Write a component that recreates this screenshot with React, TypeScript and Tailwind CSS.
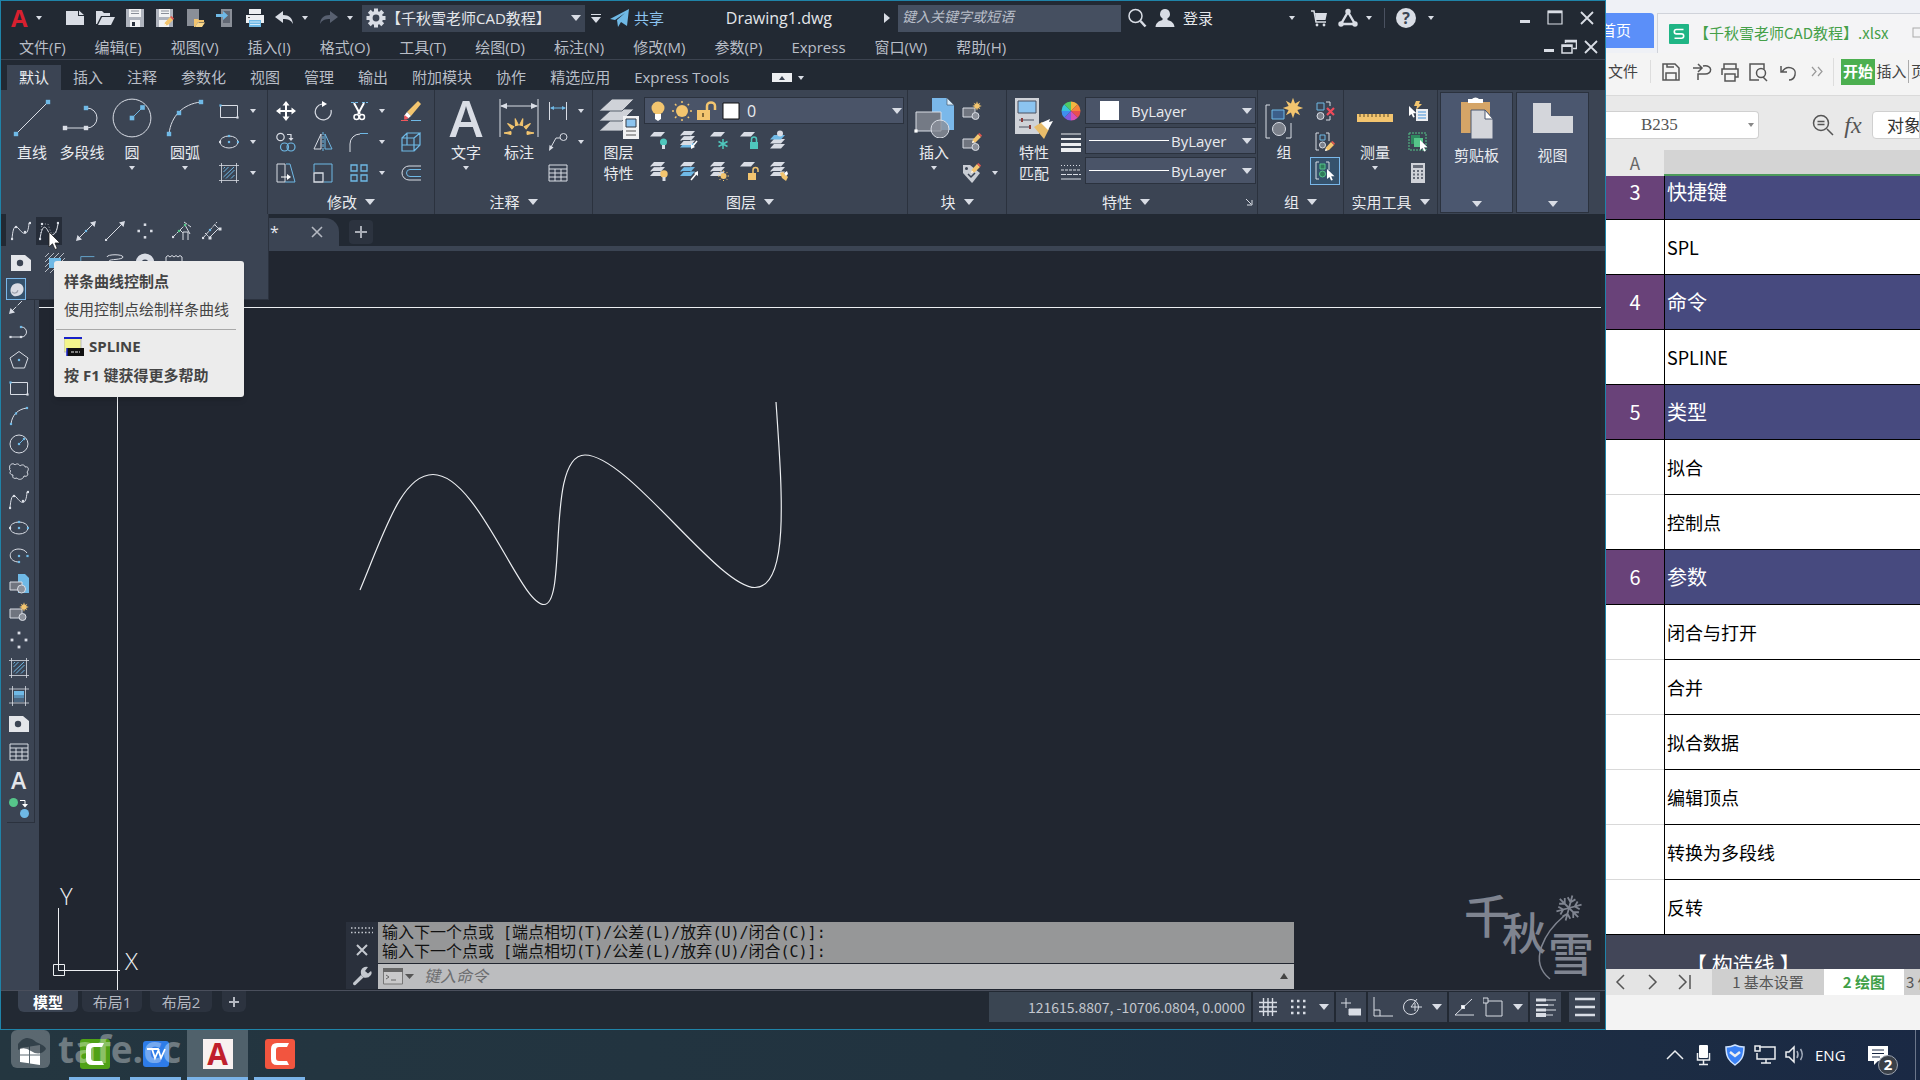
import type { ReactNode } from "react";

const W = "#d9dde5";
const B = "#6fb9e6";
const G = "#56c58a";
const Y = "#f3c56f";

const sheetIcon = (y: number, fill: string) => <path d={`M5 ${y}h11l-4 4.5h-11z`} fill={fill} />;
const dot = (x: number, y: number, fill = W, r = 1.1) => (
  <rect key={`${x}-${y}`} x={x - r} y={y - r} width={r * 2} height={r * 2} fill={fill} />
);
const star = (x: number, y: number, s: number) => (
  <path
    transform={`translate(${x} ${y}) scale(${s})`}
    d="M0-6 1.2-2.6 4.2-4.2 2.6-1.2 6 0 2.6 1.2 4.2 4.2 1.2 2.6 0 6-1.2 2.6-4.2 4.2-2.6 1.2-6 0-2.6-1.2-4.2-4.2-1.2-2.6z"
    fill={Y}
  />
);
const pencil = (x: number, y: number) => (
  <g transform={`translate(${x} ${y})`}>
    <path d="M0 9 1 5.500 6 0 9 3 4 8z" fill={Y} />
    <path d="M6 0 9 3 10 1.500 7.500-1z" fill="#e0574f" />
    <path d="M0 9 .8 6.500 2.500 8.200z" fill="#fff" />
  </g>
);
const arrow = (x: number, y: number) => (
  <path transform={`translate(${x} ${y})`} d="M0 0v10l2.500-2 1.600 3.600 1.700-.7-1.600-3.600H7.500z" fill="#fff" />
);
const layers = (mid = W) => (
  <>
    {sheetIcon(10.5, mid)}
    {sheetIcon(6, mid)}
    {sheetIcon(1, W)}
    <path d="M3 5.7h8.300M3 10.500h8.300" stroke="#3b4453" strokeWidth=".9" />
  </>
);

const icons: Record<string, ReactNode> = {
  newFile: <path d="M1 3h12v5h6v9H1z M14 2.500 19 7h-5z" fill={W} />,
  open: <path d="M1 3h6l2 2h6v3H6L2 16H1z M7 9h13l-4 8H3z" fill={W} />,
  save: (
    <>
      <path d="M1 1h18v18H1z" fill="#aeb3bd" />
      <path d="M4 1h12v8H4zM5 12h10v7H5z" fill="#f1f2f4" />
      <path d="M6 3h8M6 5.500h8" stroke="#8a8f99" />
      <path d="M7 14h3v4H7z" fill="#2a313d" />
    </>
  ),
  saveAs: (
    <>
      <path d="M1 1h17v18H1z" fill="#aeb3bd" />
      <path d="M4 1h11v8H4zM4 12h10v7H4z" fill="#f1f2f4" />
      <path d="M6 3h8M6 5.500h8" stroke="#8a8f99" />
      {pencil(9, 9)}
    </>
  ),
  openWeb: (
    <>
      <path d="M2 1h12v17H2z" fill="#8a8f98" />
      <path d="M9 11h4l1 1h5v2h-6l-3 5H9z" fill={Y} />
      <path d="M13 14.500h7L17 19h-7z" fill="#fbd88b" />
    </>
  ),
  saveWeb: (
    <>
      <path d="M6 1h11v18H6z" fill="#8a8f98" />
      <path d="M8 3h7v12H8z" fill="#626874" />
      <path d="M1 6h7V3l5 4.500L8 12V9H1z" fill={B} />
    </>
  ),
  print: (
    <>
      <path d="M4 1h12v5H4zM1 7h18v8H1z" fill="#eceef1" />
      <path d="M4 12h12v7H4z" fill={B} />
      <path d="M5 14h10M5 16.500h10" stroke="#d5ebfa" />
      <path d="M3 9.500h2" stroke="#555" />
    </>
  ),
  undo: <path d="M1 9 9 3v4c6 0 9.500 3 10 9-2-4-5-5-10-5v4z" fill={W} />,
  redo: <path d="M19 9 11 3v4C5 7 1.500 10 1 16c2-4 5-5 10-5v4z" fill="#586070" />,
  gear: (
    <>
      <g fill={W}>
        {[0, 45, 90, 135].map((a) => (
          <rect key={a} x="8" y="0.500" width="4" height="19" transform={`rotate(${a} 10 10)`} />
        ))}
        <circle cx="10" cy="10" r="7" />
      </g>
      <circle cx="10" cy="10" r="3.400" fill="#3b4453" />
    </>
  ),
  plane: <path d="M0 11 19 1l-2 17-6-4-3 5-1-7 8-7-10 7z" fill={B} />,
  search: (
    <g fill="none" stroke={W}>
      <circle cx="8.500" cy="8" r="6.500" strokeWidth="1.500" />
      <path d="m13.500 13 5 5.500" strokeWidth="2.500" />
    </g>
  ),
  user: <path d="M10 1a5 5 0 0 1 2.500 9.300V12c4 1 6.500 3 7 7H.5c.5-4 3-6 7-7v-1.700A5 5 0 0 1 10 1z" fill={W} />,
  cart: (
    <>
      <path d="M2 3h3l2 11h10" fill="none" stroke={W} strokeWidth="1.500" />
      <path d="M6 5h12l-1.500 7H7z" fill={W} />
      <circle cx="8" cy="17" r="1.400" fill={W} />
      <circle cx="15" cy="17" r="1.400" fill={W} />
    </>
  ),
  tri: (
    <g fill="none" stroke={W} strokeWidth="2.400">
      <path d="M10 4 17 16H3z" />
      <circle cx="10" cy="3.500" r="1.500" />
      <circle cx="3" cy="16" r="1.500" />
      <circle cx="17" cy="16" r="1.500" />
    </g>
  ),
  line: (
    <>
      <path d="M2 18 18 2" stroke={W} />
      {dot(2, 18, B)}
      {dot(18, 2, B)}
    </>
  ),
  polyline: (
    <>
      <path d="M1 15h11.500a5 5 0 0 0 0-10" fill="none" stroke={W} />
      {dot(1.5, 15)}
      {dot(12, 15)}
      {dot(12, 5, B)}
    </>
  ),
  circle: (
    <>
      <circle cx="10" cy="10" r="9" fill="none" stroke={W} />
      <path d="m10 10 5-5" stroke={B} />
      {dot(10, 10, B)}
      {dot(15, 5, B)}
    </>
  ),
  arc: (
    <>
      <path d="M2 18C3 9 9 3 18 2" fill="none" stroke={W} />
      {dot(2, 18, B)}
      {dot(7, 7.5, B)}
      {dot(18, 2, B)}
    </>
  ),
  rect: (
    <>
      <path d="M1.500 4.500h17v12h-17z" fill="none" stroke={W} />
      {dot(1.5, 4.5, B)}
      {dot(18.5, 16.5)}
    </>
  ),
  ellipse: (
    <>
      <ellipse cx="10" cy="10" rx="9" ry="6" fill="none" stroke={W} />
      {dot(10, 10, B)}
      {dot(10, 4, B)}
      {dot(19, 10, B)}
      {dot(1, 10)}
    </>
  ),
  ellipseArc: (
    <>
      <path d="M18 7c-2-3-5-4-9-4-11 1-10 13 1 13" fill="none" stroke={W} />
      {dot(10, 10, B)}
      {dot(18.5, 10, B)}
      {dot(10, 16, B)}
    </>
  ),
  hatch: (
    <>
      <path d="M2.500 0v20M17.500 0v20M0 2.500h20M0 17.500h20" stroke={W} strokeWidth=".8" />
      <path d="M4.500 9l5-5M4.500 14 15 4M7 15.500 15.500 7M12 15.500l3.500-3.500M4.500 5.500 6 4" stroke={B} />
    </>
  ),
  gradient: (
    <>
      <path d="M3.500 0v20M16.500 0v20M0 3h20M0 17h20" stroke={W} strokeWidth=".8" />
      <path d="M5 5h10v4H5z" fill={B} />
      <path d="M5 9h10v3H5z" fill="#5a8fb5" />
      <path d="M5 12h10v4H5z" fill="#4a6580" />
    </>
  ),
  move: (
    <path
      d="M10 0 13.500 4.500H11V9h4.500V6.500L20 10l-4.500 3.500V11H11v4.500h2.500L10 20l-3.500-4.500H9V11H4.500v2.500L0 10l4.500-3.500V9H9V4.500H6.500z"
      fill="#fff"
    />
  ),
  rotate: (
    <>
      <path d="M9 3a8 8 0 1 0 9 6" fill="none" stroke={W} strokeWidth="1.200" />
      <path d="M9 0v6l5-3z" fill="#fff" />
    </>
  ),
  trim: (
    <>
      <path d="M2 1.500h7M13 1.500h6" stroke={B} strokeDasharray="3 1" />
      <path d="M5 2l6 11M15 2 9 13" stroke="#fff" strokeWidth="2" />
      <circle cx="7.500" cy="16" r="2.500" fill="none" stroke="#fff" strokeWidth="1.500" />
      <circle cx="13" cy="16" r="2.500" fill="none" stroke="#fff" strokeWidth="1.500" />
    </>
  ),
  erase: (
    <>
      <path d="M6 11 17 0l3 3L10 15z" fill={Y} />
      <path d="m6 11 4 4-3 2.500L3 15z" fill="#fff" />
      <path d="m3.500 14 4 3-2 1.500H3z" fill="#f0575c" />
      <path d="M0 19.500h7" stroke="#f0575c" />
      <path d="M10 19.500h10" stroke={B} />
    </>
  ),
  copy: (
    <g fill="none" strokeWidth="1.200">
      <circle cx="4.500" cy="5" r="3.700" stroke={W} />
      <circle cx="8.500" cy="15" r="4" stroke={B} />
      <circle cx="15" cy="15" r="4" stroke={B} />
      <path d="M11 2.500h4v4" stroke={W} />
      <path d="m12.500 6 2.500 3 2.500-3z" fill={W} />
    </g>
  ),
  mirror: (
    <g fill="none">
      <path d="M8 2v15H1z" stroke={W} />
      <path d="M12 2v15h7z" stroke={B} />
      <path d="M10 0v20" stroke={B} strokeDasharray="3 1" />
    </g>
  ),
  fillet: (
    <>
      <path d="M1 20v-8A10 10 0 0 1 11 2" fill="none" stroke={W} />
      <path d="M11 1.500h8" stroke={B} />
    </>
  ),
  explode: (
    <g fill="none" stroke={B} strokeWidth="1.200">
      <path d="M1 6h12v13H1zM1 6l5-5h13l-6 5M19 1v12l-6 6M6 1v12H1M6 13h13" />
    </g>
  ),
  stretch: (
    <g fill="none">
      <path d="M1 1h8v18H1z" stroke={W} />
      <path d="M10 1h4l5 18H9" stroke={B} />
      <path d="M5 14h8" stroke="#fff" />
      <path d="m11 11 4 3-4 3z" fill="#fff" />
    </g>
  ),
  scale: (
    <g fill="none">
      <path d="M1 10v9h9v-9z" stroke={W} strokeWidth="1.300" />
      <path d="M1 9V1h18v18h-8" stroke={B} />
    </g>
  ),
  array: <path d="M2 2h6v6H2zM12 2h6v6h-6zM2 12h6v6H2zM12 12h6v6h-6z" fill="none" stroke={B} strokeWidth="1.300" />,
  offset: (
    <g fill="none">
      <path d="M20 3H8a7 7 0 0 0 0 14h12" stroke={W} />
      <path d="M20 6.500H9a3.500 3.500 0 0 0 0 7h11" stroke={B} />
    </g>
  ),
  dim: (
    <>
      <path d="M1.500 1v18M18.500 1v18" stroke={W} />
      <path d="M3 7h14" stroke={B} />
      <path d="M2 7l4-2v4zM18 7l-4-2v4z" fill={B} />
    </>
  ),
  leader: (
    <>
      <circle cx="15.500" cy="5" r="3.500" fill="none" stroke={W} />
      <path d="M12 6H8L3 15" fill="none" stroke={W} />
      <path d="M1 19l.5-6 4 2.500z" fill={W} />
    </>
  ),
  table: <path d="M1 2h18v16H1zM1 6h18M1 10h18M1 14h18M7 6v12M13 6v12" fill="none" stroke={W} />,
  layerOff: (
    <>
      {sheetIcon(2, W)}
      <circle cx="14.500" cy="12" r="3.500" fill="#4fc7bd" />
      <path d="M13 15h3v4h-3z" fill={W} />
    </>
  ),
  layerIso: (
    <>
      {sheetIcon(13, B)}
      {layers()}
      <path d="m18 11-5 6" stroke="#fff" strokeWidth="1.500" />
      <path d="M12 19v-5l4 3z" fill="#fff" />
    </>
  ),
  layerFreeze: (
    <>
      {sheetIcon(2, W)}
      <path d="M14 9v10M9.500 11.500l9 5M9.500 16.500l9-5" stroke="#4fc7bd" strokeWidth="1.500" />
    </>
  ),
  layerLock: (
    <>
      {sheetIcon(2, W)}
      <path d="M11 12h8v7h-8z" fill="#4fc7bd" />
      <path d="M12.500 12V9.500a2.500 2.500 0 0 1 5 0V12" fill="none" stroke="#4fc7bd" strokeWidth="1.500" />
    </>
  ),
  layerCurrent: (
    <>
      {sheetIcon(14, W)}
      {sheetIcon(9, W)}
      {sheetIcon(5, B)}
      <circle cx="11" cy="3.500" r="3" fill={W} />
    </>
  ),
  layerOn: (
    <>
      {layers()}
      <circle cx="15" cy="13" r="3.700" fill={Y} />
      <path d="M13.500 16h3v4h-3z" fill={W} />
    </>
  ),
  layerUniso: (
    <>
      {layers(B)}
      <path d="m12 19 5-6" stroke="#fff" strokeWidth="1.500" />
      <path d="M19 10v5l-4-3z" fill="#fff" />
    </>
  ),
  layerThaw: (
    <>
      {layers()}
      <circle cx="14.500" cy="15" r="3" fill={Y} />
      <path d="M14.500 9.500v11M9 15h11M10.500 11l8 8M10.500 19l8-8" stroke={Y} strokeDasharray="1.500 8" />
    </>
  ),
  layerUnlock: (
    <>
      {sheetIcon(1, W)}
      <path d="M9 12h8v7H9z" fill={Y} />
      <path d="M14 12V9a2.500 2.500 0 0 1 5 0v2" fill="none" stroke={Y} strokeWidth="1.500" />
    </>
  ),
  layerMatch: (
    <>
      {layers()}
      <path d="m11 12 3-1 5 5-2 4-4-3z" fill={Y} />
      <path d="m15 12 3-2 1 3-2 2z" fill="#fff" />
    </>
  ),
  blockNew: (
    <>
      <path d="M1 7h12v9H1z" fill="#70757f" stroke={W} />
      <circle cx="13.500" cy="15" r="3.500" fill="#8b909a" stroke={W} />
      {star(15, 5, 0.8)}
    </>
  ),
  blockEdit: (
    <>
      <path d="M1 7h12v9H1z" fill="#70757f" stroke={W} />
      <circle cx="13.500" cy="15" r="3.500" fill="#8b909a" stroke={W} />
      {pencil(10, 2)}
    </>
  ),
  attr: (
    <>
      <path d="M1 2h7l5 4 5 4-7 9-1 1L1 10z" fill="#c9cdd4" />
      <circle cx="4.500" cy="5.500" r="1.500" fill="#3b4453" />
      {pencil(9, 1)}
      <path d="m6 11 3 3 4-4" stroke="#3b4453" fill="none" strokeWidth="1.500" />
    </>
  ),
  insertSmall: (
    <>
      <path d="M9 0h7l4 4v15H9z" fill={B} />
      <path d="M1 8h12v8H1z" fill="#70757f" stroke={W} />
      <circle cx="12.500" cy="15" r="4" fill="#8b909a" stroke={W} />
    </>
  ),
  wheel: (
    <g>
      {["#f4b63f", "#f5843c", "#e94f4f", "#d84fb4", "#7d5be0", "#3f8ff0", "#38c3d8", "#4fc964"].map((c, i) => (
        <path key={c} d="M10 10V.5a9.500 9.500 0 0 1 6.720 2.780z" fill={c} transform={`rotate(${i * 45} 10 10)`} />
      ))}
    </g>
  ),
  weights: <path d="M0 1.500h20v1H0zM0 6h20v2H0zM0 11h20v3H0zM0 16h20v4H0z" fill="#eceef1" />,
  linetypes: (
    <g stroke={W}>
      <path d="M0 2.500h20" strokeDasharray="1 2" />
      <path d="M0 7h20" strokeDasharray="3 1" />
      <path d="M0 11.500h20" strokeDasharray="5 1" />
      <path d="M0 16h20" />
    </g>
  ),
  ungroup: (
    <>
      <path d="M2 2h7v7H2z" fill="none" stroke={B} />
      <path d="M11 1h4v4M15 15v4h-4" fill="none" stroke={W} />
      <circle cx="5.500" cy="15" r="3.500" fill="#7b808a" stroke={W} />
      <path d="m12 7 7 7M19 7l-7 7" stroke="#ef4a5a" strokeWidth="2.200" />
    </>
  ),
  groupEdit: (
    <>
      <path d="M4 1H1v17h3M11 1h3v8" fill="none" stroke={W} />
      <path d="M5 3h5v5H5z" fill="none" stroke={B} />
      <circle cx="7.500" cy="13" r="3" fill="#7b808a" stroke={W} />
      {pencil(10, 10)}
    </>
  ),
  groupSel: (
    <>
      <path d="M4 1H1v17h3M11 1h3v8" fill="none" stroke={W} />
      <path d="M5 3h5v5H5z" fill="#2f7a5a" stroke={G} />
      <circle cx="7.500" cy="13" r="3" fill="#2f7a5a" stroke={G} />
      {arrow(12, 8)}
    </>
  ),
  quickSel: (
    <>
      <path d="M8 0h4l-1 3h3l-6 6 1-4H6z" fill={Y} />
      <path d="M8 8h12v12H8z" fill="#eceef1" />
      <path d="M10 11h8M10 14h8M10 17h8" stroke="#3f8fd8" />
      {arrow(1, 5)}
    </>
  ),
  selAll: (
    <>
      <path d="M1 1h17v17H1z" fill="none" stroke={G} strokeDasharray="2 1" />
      <path d="M3 3h9v9H3z" fill="#2f8a60" />
      <path d="M6 6h9v9H6z" fill={G} />
      {arrow(12, 8)}
    </>
  ),
  calc: (
    <>
      <path d="M3 0h14v20H3z" fill="#cfd2d8" />
      <path d="M5 2h10v3H5z" fill="#666c78" />
      <path d="M5 8h10M5 11.500h10M5 15h10" stroke="#666c78" strokeWidth="2" strokeDasharray="2 2" />
    </>
  ),
  spline: (
    <>
      <path d="M1 18C2 6 4 3 8 8s9 9 10-6" fill="none" stroke={W} />
      {dot(1, 18)}
      {dot(5, 6)}
      {dot(14, 11)}
      {dot(19, 2)}
    </>
  ),
  splineCv: (
    <>
      <path d="M1 18C3 4 6 4 9 10s8 6 10-7" fill="none" stroke={W} />
      <path d="M1 18 3 3h6l3 9h5l2-10" fill="none" stroke={W} strokeWidth=".7" strokeDasharray="1 2" />
      {dot(1, 18)}
      {dot(3, 3)}
      {dot(19, 2)}
    </>
  ),
  xline: (
    <>
      <path d="M3 17 17 3" stroke={W} />
      <path d="M0 20l1.500-6 4.500 4.500zM20 0l-1.500 6L14 1.500z" fill={W} />
      {dot(10, 10, B)}
    </>
  ),
  ray: (
    <>
      <path d="M1 19 17 3" stroke={W} />
      <path d="M20 0l-1.500 6L14 1.500z" fill={W} />
      {dot(1, 19)}
    </>
  ),
  points: <>{[dot(10, 3, W, 1.4), dot(3, 10, W, 1.4), dot(17, 10, W, 1.4), dot(10, 17, W, 1.4)]}</>,
  divide: (
    <>
      <path d="M1 16 13 4M8 9l3 3M12 1l7 5" stroke={W} strokeDasharray="4 1" />
      <path d="M11 19v-8h5v8M13 4l5 9" stroke={W} fill="none" />
      {dot(7, 10, G)}
      {dot(13, 4, G)}
      {dot(1, 16)}
    </>
  ),
  measure: (
    <>
      <path d="M1 17 15 1M3 12l6 6M13 4l5 5" stroke={W} strokeDasharray="4 1" />
      <path d="m8 16 9-9" stroke={W} />
      {dot(8, 9, B)}
      {dot(18, 8, W, 1.5)}
      {dot(8, 17, W, 1.5)}
      {dot(1, 17)}
    </>
  ),
  region: (
    <>
      <path d="M0 2h14l6 5v11H0z" fill="#e4e6ea" />
      <circle cx="9" cy="10" r="3.200" fill="#3b4453" />
    </>
  ),
  wipeout: (
    <>
      <path d="M0 4l4-4M0 9l9-9M0 14 14 0M0 19 19 0M5 20 20 5" stroke={W} strokeWidth=".8" />
      <path d="M4 5h12v10H4z" fill={B} />
    </>
  ),
  block3d: <path d="M1 2h17M1 2v17" fill="none" stroke={B} />,
  helix: <path d="M2 4c0-3 16-3 16 0S4 6 4 8s14 3 14 0" fill="none" stroke={W} />,
  donut: <circle cx="10" cy="10" r="6.500" fill="none" stroke={W} strokeWidth="6" />,
  revcloudRect: <path d="M1 16V4q2-3 4 0 2-3 4 0 2-3 4 0 2-3 4 0v12" fill="none" stroke={W} />,
  polygon: (
    <>
      <path d="M10 1.500 19 8l-3.500 10h-11L1 8z" fill="none" stroke={W} />
      {dot(10, 10, B)}
    </>
  ),
  cloud: (
    <path
      d="M1 7C-1 3 4 0 6 3c2-2 4-1 5 1 2-2 5-1 5 1 4-1 4 3 2 5 2 3 0 5-3 4-1 4-6 4-7 2-3 1-5 0-4-3-3 0-4-3-2-4-2-1-2-2-1-2z"
      fill="none"
      stroke={W}
    />
  ),
  addSel: (
    <>
      <circle cx="4.500" cy="4.500" r="4.500" fill={G} />
      <circle cx="15.500" cy="15.500" r="4.500" fill={B} />
      <path d="M11 2.500h5v4" stroke="#fff" fill="none" />
      <path d="m13 6 3 3.500L19 6z" fill="#fff" />
    </>
  ),
  lineArrow: (
    <>
      <path d="M3 17 17 3" stroke={W} strokeDasharray="6 2" />
      <path d="M0 20l1.500-6 4.500 4.500z" fill={W} />
    </>
  ),
  mask: (
    <>
      <path d="M3 7C5 1 17-1 19 7s-5 12-10 12S0 13 3 7z" fill={W} />
      <path d="M4 13c2 3 7 2 8-2" fill="none" stroke="#9aa0ab" strokeWidth="1.500" />
    </>
  ),
};

/* large icons keep hairline strokes */
const Icon = ({ name, size = 20 }: { name: string; size?: number }) => (
  <svg
    width={size}
    height={size}
    viewBox="0 0 20 20"
    className={`shrink-0 ${size > 30 ? "[&_circle]:[vector-effect:non-scaling-stroke] [&_path]:[vector-effect:non-scaling-stroke]" : ""}`}
    aria-hidden="true"
  >
    {icons[name]}
  </svg>
);

const Caret = ({ big = false }: { big?: boolean }) =>
  big ? (
    <svg width="10" height="6" viewBox="0 0 10 6" className="shrink-0">
      <path d="M0 0h10L5 6z" fill={W} />
    </svg>
  ) : (
    <svg width="6" height="4" viewBox="0 0 6 4" className="shrink-0">
      <path d="M0 0h6L3 4z" fill={W} />
    </svg>
  );

const LetterA = ({ className }: { className: string }) => (
  <span className={`font-['Open_Sans'] ${className}`}>A</span>
);

/* ---------- title bar and menus ---------- */

const quickAccess = ["newFile", "open", "save", "saveAs", "openWeb", "saveWeb", "print"];

const WindowButtons = ({ gap, restore = false }: { gap: string; restore?: boolean }) => (
  <div className={`flex items-center ${gap}`}>
    <button aria-label="最小化" className="h-[10px] w-[10px] border-b-[3px] border-[#d9dde5]" />
    <button aria-label="最大化">
      <svg width="16" height="16" viewBox="0 0 16 16" fill="none" stroke={W}>
        {restore ? (
          <>
            <path d="M4.500 4V1.500h11v8H12" strokeWidth="1.500" />
            <path d="M1 6h10v8H1z" strokeWidth="1.500" />
            <path d="M1 7h10M5 2.500h10" strokeWidth="2" />
          </>
        ) : (
          <>
            <path d="M1 1h14v13H1z" strokeWidth="1.200" />
            <path d="M1 2h14" strokeWidth="2.500" />
          </>
        )}
      </svg>
    </button>
    <button aria-label="关闭">
      <svg width="14" height="14" viewBox="0 0 14 14" stroke={W} strokeWidth="1.800">
        <path d="m1 1 12 12M13 1 1 13" />
      </svg>
    </button>
  </div>
);

const TitleBar = () => (
  <div className="flex h-8 items-center pt-[2px] text-[15px] text-[#e4e6ea]">
    <button aria-label="应用程序菜单" className="flex w-[59px] items-center gap-2 pl-[10px]">
      <LetterA className="text-[24px] leading-6 font-bold text-[#d8202f]" />
      <Caret />
    </button>
    {quickAccess.map((name) => (
      <button key={name} aria-label={name} className="flex w-[30px] justify-center">
        <Icon name={name} />
      </button>
    ))}
    <button aria-label="放弃" className="flex w-[45px] items-center gap-2 pl-1">
      <Icon name="undo" />
      <Caret />
    </button>
    <button aria-label="重做" className="flex w-[47px] items-center gap-2 pl-1">
      <Icon name="redo" />
      <Caret />
    </button>
    <label className="flex h-[27px] w-[223px] items-center bg-[#3b4453] pl-1">
      <Icon name="gear" />
      <select aria-label="工作空间" className="h-6 min-w-0 flex-1 appearance-none bg-transparent text-[15px]">
        <option>【千秋雪老师CAD教程】</option>
      </select>
      <span className="pr-1">
        <Caret big />
      </span>
    </label>
    <button aria-label="自定义快速访问" className="flex w-[21px] flex-col items-center gap-[2px]">
      <span className="h-px w-[10px] bg-[#d9dde5]" />
      <Caret big />
    </button>
    <button className="flex items-center gap-1 pl-1 text-[#8cc4f0]">
      <Icon name="plane" />
      共享
    </button>
    <div className="flex min-w-0 flex-1 items-center justify-end pr-[52px]">
      <span className="text-[16px]">Drawing1.dwg</span>
    </div>
    <svg width="6" height="10" viewBox="0 0 6 10" className="mr-2">
      <path d="M0 0v10l6-5z" fill={W} />
    </svg>
    <input
      aria-label="搜索"
      placeholder="键入关键字或短语"
      className="h-[27px] w-[223px] bg-[#454f60] pb-1 pl-1 text-[14px] italic placeholder:text-[#b9bec8]"
    />
    <button aria-label="搜索" className="flex w-8 justify-center">
      <Icon name="search" />
    </button>
    <button className="flex w-[132px] items-center gap-1 pl-[2px]">
      <Icon name="user" />
      <span className="pl-1">登录</span>
    </button>
    <span className="flex w-[20px] pl-1">
      <Caret />
    </span>
    <button aria-label="购物车" className="flex w-[28px] justify-center">
      <Icon name="cart" />
    </button>
    <button aria-label="应用商店" className="flex w-[51px] items-center gap-2 pl-[5px]">
      <Icon name="tri" />
      <Caret />
    </button>
    <span className="h-5 w-px bg-[#4a5160]" />
    <button aria-label="帮助" className="flex w-[135px] items-center gap-3 pl-[11px]">
      <span className="flex h-5 w-5 items-center justify-center rounded-full bg-[#d9dde5] text-[16px] leading-5 font-bold text-[#3b4453]">
        ?
      </span>
      <Caret />
    </button>
    <WindowButtons gap="gap-[17px]" />
    <span className="w-[11px]" />
  </div>
);

const menus = [
  "文件(F)", "编辑(E)", "视图(V)", "插入(I)", "格式(O)", "工具(T)", "绘图(D)",
  "标注(N)", "修改(M)", "参数(P)", "Express", "窗口(W)", "帮助(H)",
];

const MenuBar = () => (
  <nav className="flex h-[27px] items-center border-b border-[#3c4350] pt-[2px] pl-[18px] text-[15px] text-[#b9bec7]">
    <div className="flex flex-1 gap-[29px]">
      {menus.map((m) => (
        <button key={m} className="leading-6 whitespace-nowrap">
          {m}
        </button>
      ))}
    </div>
    <div className="pr-[7px]">
      <WindowButtons gap="gap-[7px]" restore />
    </div>
  </nav>
);

const ribbonTabs = ["插入", "注释", "参数化", "视图", "管理", "输出", "附加模块", "协作", "精选应用", "Express Tools"];

const RibbonTabs = () => (
  <div className="flex h-[30px] items-end pl-[6px] text-[15px] text-[#b9bec7]">
    <button className="h-[25px] w-[54px] bg-[#3b4453] text-[#eceef1]">默认</button>
    {ribbonTabs.map((t) => (
      <button key={t} className="h-[25px] px-3 whitespace-nowrap">
        {t}
      </button>
    ))}
    <button aria-label="最小化功能区" className="flex h-[25px] items-center gap-[6px] pl-[30px]">
      <span className="flex h-[9px] w-5 items-center justify-center bg-[#eceef1]">
        <svg width="6" height="4" viewBox="0 0 6 4">
          <path d="M0 4h6L3 0z" fill="#3b4453" />
        </svg>
      </span>
      <Caret />
    </button>
  </div>
);

/* ---------- ribbon ---------- */

const Panel = ({ title, width, launcher, children }: { title?: string; width: string; launcher?: boolean; children: ReactNode }) => (
  <section className={`flex h-[124px] shrink-0 flex-col border-r border-[#2b323e] ${width}`}>
    <div className="flex h-[100px] pt-[5px]">{children}</div>
    {title && (
      <div className="flex h-6 items-center">
        <button className="flex flex-1 items-center justify-center gap-2 text-[15px] leading-6">
          {title}
          <Caret big />
        </button>
        {launcher && (
          <svg width="8" height="8" viewBox="0 0 8 8" className="mr-[4px]" fill="none" stroke={W}>
            <path d="m1 1 5 5M7 2v5H2" />
          </svg>
        )}
      </div>
    )}
  </section>
);

const Big = ({ label, width, icon, caret }: { label: string[]; width: string; icon: ReactNode; caret?: boolean }) => (
  <button className={`flex shrink-0 flex-col items-center pt-[3px] ${width}`}>
    <span className="flex h-10 items-center justify-center">{icon}</span>
    <span className="flex flex-col pt-1 text-[15px] leading-[21px] whitespace-nowrap">
      {label.map((l) => (
        <span key={l}>{l}</span>
      ))}
    </span>
    {caret && (
      <span className="pt-[3px]">
        <Caret />
      </span>
    )}
  </button>
);

/* "v" in a row stands for a small drop-down arrow, "-" for an empty place */
const SmallGrid = ({ cols, items }: { cols: string; items: string[] }) => (
  <div className={`grid auto-rows-[31px] items-center justify-items-center ${cols}`}>
    {items.map((n, i) =>
      n === "-" ? (
        <span key={i} />
      ) : n === "v" ? (
        <button key={i} aria-label="更多">
          <Caret />
        </button>
      ) : (
        <button key={i} aria-label={n}>
          <Icon name={n} />
        </button>
      ),
    )}
  </div>
);

const DimIcon = () => (
  <svg width="40" height="40" viewBox="0 0 40 40">
    <path d="M1 1v38M39 1v38M2 8h36" stroke={W} />
    <path d="m1 8 7-3v6zM39 8l-7-3v6z" fill={W} />
    {[-90, -50, -15, 15, 50, 90].map((a) => (
      <path key={a} d="M-1.500-8 0-15 1.500-8z" transform={`translate(20 35) rotate(${a})`} fill={Y} stroke={Y} />
    ))}
  </svg>
);

const LayerPropsIcon = () => (
  <svg width="40" height="42" viewBox="0 0 40 42">
    {[22, 12, 2].map((y) => (
      <path key={y} d={`M13 ${y}h22l-12 12H0z`} fill="#cfd2d8" stroke="#3b4453" strokeWidth=".8" />
    ))}
    <path d="M24 19h16v23H24z" fill="#f1f2f4" />
    <path d="M27 22h10v8H27z" fill="#8cc4f0" stroke="#333a47" />
    <path d="M27 34h10M27 38h10" stroke="#555" />
  </svg>
);

const InsertIcon = () => (
  <svg width="40" height="40" viewBox="0 0 40 40">
    <path d="M18 0h15l7 7v25H18z" fill="#7ab8ea" />
    <path d="M33 0v7h7z" fill="#d7ebfa" stroke="#3b4453" strokeWidth=".6" />
    <path d="M2 14h25v19H2z" fill="#747a85" stroke={W} />
    <circle cx="26" cy="31" r="9" fill="#8b909a" fillOpacity=".8" stroke={W} />
    {dot(2, 33, "#fff", 1.6)}
  </svg>
);

const MatchIcon = () => (
  <svg width="40" height="42" viewBox="0 0 40 42">
    <path d="M1 1h24v36H1z" fill="#cfd2d8" />
    <path d="M4 4h18v12H4z" fill="#8cc4f0" stroke="#4a5160" />
    <path d="M5 23h15M5 30h12" stroke="#4a5160" />
    <path d="M8 21v4M16 28v4" stroke="#8a3b3b" strokeWidth="2" />
    <path d="m20 30 8-5 7 7-5 10z" fill="#e9bd6a" />
    <path d="m27 26 9-4-1 3 4-1-5 9z" fill="#fff" />
  </svg>
);

const GroupIcon = () => (
  <svg width="40" height="42" viewBox="0 0 40 42">
    <path d="M6 8H2v33h4M22 41h5V26" fill="none" stroke={W} />
    <path d="M8 13h12v9H8z" fill="#3c5f8a" stroke={B} />
    <circle cx="15" cy="32" r="6.500" fill="#7b808a" stroke={W} />
    {star(29, 11, 1.7)}
  </svg>
);

const RulerIcon = () => (
  <svg width="36" height="10" viewBox="0 0 36 10">
    <path d="M0 1h36v8H0z" fill={Y} />
    <path d="M3 1v3M7 1v3M11 1v3M15 1v3M19 1v3M23 1v3M27 1v3M31 1v3" stroke="#5d4a26" />
  </svg>
);

const PasteIcon = () => (
  <svg width="34" height="42" viewBox="0 0 34 42">
    <path d="M1 5h29v31H1z" fill="#d5a567" />
    <path d="M8 2h4a4 3 0 0 1 7 0h4v4H8z" fill="#fff" />
    <path d="M11 13h14l8 9v20H11z" fill="#d4d6db" stroke="#4b576f" />
    <path d="M25 13v9h8z" fill="#fff" stroke="#4b576f" />
  </svg>
);

const LayerCombo = () => (
  <label className="flex h-[27px] w-[260px] items-center border border-[#2b323e] bg-[#4a5468] pl-1">
    <svg width="94" height="22" viewBox="0 0 94 22">
      <circle cx="9" cy="8" r="6.500" fill={Y} />
      <path d="M6 14h6v5l-3 2-3-2z" fill="#fff" />
      <circle cx="33" cy="11" r="6" fill={Y} />
      <path d="M33 1v20M23 11h20M26 4l14 14M26 18 40 4" stroke={Y} strokeDasharray="2 16" strokeWidth="1.500" />
      <path d="M48 10h13v10H48z" fill={Y} />
      <path d="M58 10V6a4 3.500 0 0 1 8 0v4" fill="none" stroke={Y} strokeWidth="2.500" />
      <path d="M54 13v4" stroke="#5d4a26" strokeWidth="1.500" />
      <path d="M74 3h16v16H74z" fill="#fff" stroke="#111" />
    </svg>
    <select aria-label="图层" className="min-w-0 flex-1 appearance-none bg-transparent pl-1 text-[16px] leading-6">
      <option>0</option>
    </select>
    <span className="pr-px">
      <Caret big />
    </span>
  </label>
);

const PropCombo = ({ label, color }: { label: string; color?: boolean }) => (
  <label className="flex h-[27px] items-center border border-[#2b323e] bg-[#4a5468] pr-[3px] pl-[3px]">
    {color ? <span className="mr-[10px] ml-[11px] h-[19px] w-[19px] bg-white" /> : <span className="h-px w-[80px] bg-white" />}
    <select aria-label={label} className="min-w-0 flex-1 appearance-none bg-transparent pl-[2px] text-[15px] leading-6">
      <option>ByLayer</option>
    </select>
    <Caret big />
  </label>
);

const SidePanel = ({ label, icon }: { label: string; icon: ReactNode }) => (
  <button className="flex h-[121px] w-[73px] flex-col items-center border border-[#2b323e] bg-[#4b576f] pt-1">
    <span className="flex h-[42px] items-center">{icon}</span>
    <span className="flex-1 pt-1 text-[15px] leading-6">{label}</span>
    <span className="pb-[5px]">
      <Caret big />
    </span>
  </button>
);

const Ribbon = () => (
  <div className="flex h-[124px] bg-[#3b4453] pl-[6px] text-[#e9ebef]">
    <Panel width="w-[261px]">
      <Big width="w-[50px]" label={["直线"]} icon={<Icon name="line" size={40} />} />
      <Big width="w-[50px]" label={["多段线"]} icon={<Icon name="polyline" size={40} />} />
      <Big width="w-[50px]" label={["圆"]} caret icon={<Icon name="circle" size={42} />} />
      <Big width="w-[56px]" label={["圆弧"]} caret icon={<Icon name="arc" size={40} />} />
      <SmallGrid cols="grid-cols-[32px_15px]" items={["rect", "v", "ellipse", "v", "hatch", "v"]} />
    </Panel>
    <Panel title="修改" width="w-[167px]">
      <SmallGrid
        cols="grid-cols-[36px_37px_36px_10px_47px]"
        items={[
          "move", "rotate", "trim", "v", "erase",
          "copy", "mirror", "fillet", "v", "explode",
          "stretch", "scale", "array", "v", "offset",
        ]}
      />
    </Panel>
    <Panel title="注释" width="w-[158px]">
      <Big
        width="w-[62px]"
        label={["文字"]}
        caret
        icon={<LetterA className="text-[50px] leading-10 font-semibold text-[#d9dde5]" />}
      />
      <Big width="w-[44px]" label={["标注"]} icon={<DimIcon />} />
      <SmallGrid cols="grid-cols-[34px_12px]" items={["dim", "v", "leader", "v", "table", "-"]} />
    </Panel>
    <Panel title="图层" width="w-[315px]">
      <Big width="w-[51px]" label={["图层", "特性"]} icon={<LayerPropsIcon />} />
      <div className="pt-[2px]">
        <LayerCombo />
        <SmallGrid
          cols="grid-cols-[repeat(5,30px)]"
          items={[
            "layerOff", "layerIso", "layerFreeze", "layerLock", "layerCurrent",
            "layerOn", "layerUniso", "layerThaw", "layerUnlock", "layerMatch",
          ]}
        />
      </div>
    </Panel>
    <Panel title="块" width="w-[99px]">
      <Big width="w-[52px]" label={["插入"]} caret icon={<InsertIcon />} />
      <SmallGrid cols="grid-cols-[24px_22px]" items={["blockNew", "-", "blockEdit", "-", "attr", "v"]} />
    </Panel>
    <Panel title="特性" width="w-[251px]" launcher>
      <Big width="w-[54px]" label={["特性", "匹配"]} icon={<MatchIcon />} />
      <SmallGrid cols="grid-cols-[20px]" items={["wheel", "weights", "linetypes"]} />
      <div className="ml-1 flex w-[171px] flex-col gap-[3px] pt-[2px]">
        <PropCombo label="颜色" color />
        <PropCombo label="线宽" />
        <PropCombo label="线型" />
      </div>
    </Panel>
    <Panel title="组" width="w-[86px]">
      <Big width="w-[52px]" label={["组"]} icon={<GroupIcon />} />
      <div className="flex w-[30px] flex-col">
        <SmallGrid cols="grid-cols-[30px]" items={["ungroup", "groupEdit"]} />
        <button aria-label="组选择" className="flex h-7 w-[30px] items-center justify-center border border-[#7ab8ea] bg-[#35526c]">
          <Icon name="groupSel" />
        </button>
      </div>
    </Panel>
    <Panel title="实用工具" width="w-[94px]">
      <Big width="w-[62px]" label={["测量"]} caret icon={<RulerIcon />} />
      <SmallGrid cols="grid-cols-[24px]" items={["quickSel", "selAll", "calc"]} />
    </Panel>
    <div className="flex gap-[3px] pt-[2px] pl-[2px]">
      <SidePanel label="剪贴板" icon={<PasteIcon />} />
      <SidePanel
        label="视图"
        icon={
          <svg width="40" height="32" viewBox="0 0 40 32">
            <path d="M0 1h18v13h22v17H0z" fill="#d4d6db" />
          </svg>
        }
      />
    </div>
  </div>
);

/* ---------- expanded draw panel and tooltip ---------- */

const DrawFlyout = () => (
  <div className="absolute top-[213px] left-[5px] z-10 h-[86px] w-[263px] border-r border-b border-[#2b323e] bg-[#3b4453]">
    <div className="flex h-[33px] items-center">
      <span className="flex w-[30px] justify-center"><Icon name="spline" /></span>
      <button aria-label="样条曲线控制点" className="flex h-7 w-[26px] items-center justify-center bg-[#262d39]">
        <Icon name="splineCv" />
      </button>
      <span className="flex w-[44px] justify-center pl-1"><Icon name="xline" /></span>
      <span className="flex w-[18px] justify-center"><Icon name="ray" /></span>
      <span className="flex w-[42px] justify-center"><Icon name="points" size={18} /></span>
      <span className="flex w-[32px] justify-center"><Icon name="divide" /></span>
      <span className="flex w-[28px] justify-center"><Icon name="measure" /></span>
    </div>
    <div className="flex h-[31px] items-center">
      <span className="flex w-[30px] justify-center"><Icon name="region" /></span>
      <span className="flex w-[38px] justify-center"><Icon name="wipeout" /></span>
      <span className="flex w-[28px] justify-center"><Icon name="block3d" size={16} /></span>
      <span className="flex w-[26px] justify-center"><Icon name="helix" /></span>
      <span className="flex w-[34px] justify-center"><Icon name="donut" /></span>
      <span className="flex w-[26px] justify-center"><Icon name="revcloudRect" /></span>
    </div>
    <button aria-label="区域覆盖" className="flex h-[22px] w-[20px] items-center justify-center border border-[#7ab8ea] bg-[#35526c]">
      <Icon name="mask" size={15} />
    </button>
  </div>
);

const Tooltip = () => (
  <div
    role="tooltip"
    className="absolute top-[260px] left-[53px] z-20 h-[136px] w-[190px] rounded-[3px] bg-[#ececec] pt-[9px] text-[15px] text-[#444] shadow-md"
  >
    <p className="pl-[10px] leading-[22px] font-bold">样条曲线控制点</p>
    <p className="pt-[6px] pl-[10px] leading-[22px]">使用控制点绘制样条曲线</p>
    <hr className="mt-[9px] mr-2 ml-[2px] border-[#a9a9a9]" />
    <p className="flex items-center gap-[5px] pt-[5px] pl-[10px] leading-[22px] font-bold">
      <svg width="20" height="19" viewBox="0 0 20 19">
        <path d="M0 1h17v14H0z" fill="#f3f58c" stroke="#bbb" />
        <path d="M0 1h18" stroke="#1a22c8" strokeWidth="2" />
        <path d="M3 11h17v8H3z" fill="#111" />
        <path d="M3 11v8" stroke="#1a22c8" strokeWidth="1.500" />
        <path d="M7 15h9" stroke="#eee" strokeDasharray="3 1" />
      </svg>
      SPLINE
    </p>
    <p className="pt-[7px] pl-[10px] leading-[22px] font-bold">按 F1 键获得更多帮助</p>
  </div>
);

const Pointer = () => (
  <svg width="14" height="20" viewBox="0 0 14 20" className="absolute top-[230px] left-[47px] z-30">
    <path d="M1 1v15l3.500-3.200L7 18.500l2.300-1L7 12h5z" fill="#fff" stroke="#222" strokeWidth=".8" />
  </svg>
);

/* ---------- drawing area ---------- */

const FileTabs = () => (
  <div className="flex h-[37px] flex-col justify-end bg-[#222933] pl-[267px]">
    <div className="flex h-7 items-center">
      <div className="flex h-7 w-[71px] items-center justify-between rounded-tr-[14px] bg-[#3b4453] pr-4 pl-[2px] text-[16px] text-[#e4e6ea]">
        <span>*</span>
        <button aria-label="关闭图形">
          <svg width="12" height="12" viewBox="0 0 12 12" stroke="#b4b8c1" strokeWidth="1.600">
            <path d="m1 1 10 10M11 1 1 11" />
          </svg>
        </button>
      </div>
      <button aria-label="新图形" className="ml-[10px] flex h-6 w-6 items-center justify-center rounded bg-[#2c333f]">
        <svg width="12" height="12" viewBox="0 0 12 12" stroke="#a9adb6" strokeWidth="2">
          <path d="M6 0v12M0 6h12" />
        </svg>
      </button>
    </div>
    <div className="-ml-[267px] h-[5px] bg-[#3b4453]" />
  </div>
);

const tools = [
  "lineArrow", "polyline", "polygon", "rect", "arc", "circle", "cloud", "spline", "ellipse", "ellipseArc",
  "insertSmall", "blockNew", "points", "hatch", "gradient", "region", "table", "A", "addSel",
];

const ToolColumn = () => (
  <div className="flex w-[38px] shrink-0 flex-col bg-[#3b4453] pt-[39px] pl-[6px]">
    <div className="flex w-[28px] flex-col border-r border-b border-[#2b323e]">
      {tools.map((t) => (
        <button key={t} aria-label={t} className="flex h-7 w-[23px] items-center justify-center">
          {t === "A" ? <LetterA className="text-[23px] leading-6 font-semibold text-[#e4e6ea]" /> : <Icon name={t} />}
        </button>
      ))}
    </div>
  </div>
);

/* Latin characters sit one size below the Chinese ones in the command history */
const History = ({ text }: { text: string }) => (
  <p className="h-[19px] leading-[19px] whitespace-pre">
    {text.split(/([\x20-\x7e]+)/).map((part, i) =>
      i % 2 ? (
        <span key={i} className="text-[15px]">
          {part}
        </span>
      ) : (
        part
      ),
    )}
  </p>
);

const prompt = "输入下一个点或 [端点相切(T)/公差(L)/放弃(U)/闭合(C)]:";

const CommandLine = () => (
  <div className="absolute right-[307px] bottom-[1px] left-[307px] flex h-[67px]">
    <div className="flex w-8 flex-col items-center gap-[10px] bg-[#2a303c] pt-[5px]">
      <svg width="22" height="7" viewBox="0 0 22 7" stroke="#c4c8cf" strokeWidth="1.500" strokeDasharray="1.500 2">
        <path d="M0 1h22M0 5.500h22" />
      </svg>
      <svg width="12" height="12" viewBox="0 0 12 12" stroke="#c4c8cf" strokeWidth="2">
        <path d="m1 1 10 10M11 1 1 11" />
      </svg>
      <svg width="20" height="20" viewBox="0 0 20 20" fill="#c4c8cf">
        <path d="M1 17 9 9l2.500 2.500L3.500 19Q1 20 1 17z" />
        <path d="M16 1q-5-1-7 3.500Q8.500 7 9.500 9.500l2 2q5 1 7-2 2-2 .5-4.500L16 7.500 13 5z" />
      </svg>
    </div>
    <div className="flex flex-1 flex-col">
      <div className="h-[41px] bg-[#969798] pt-px pl-1 font-['DejaVu_Sans_Mono','Noto_Sans_CJK_SC',monospace] text-[16px] text-[#111]">
        <History text={prompt} />
        <History text={prompt} />
      </div>
      <div className="mt-px flex flex-1 items-center bg-[#bcbdbf] pr-[6px] pb-px pl-[5px]">
        <svg width="32" height="17" viewBox="0 0 32 17">
          <path d="M.5 1h19v15H.5z" fill="#c9c9ca" stroke="#777" />
          <path d="M0 0h20v4H0z" fill="#666" />
          <path d="m3 7 3 2-3 2M8 12h5" fill="none" stroke="#666" />
          <path d="M22 6h9l-4.500 5z" fill="#555" />
        </svg>
        <input
          aria-label="命令"
          placeholder="键入命令"
          className="ml-[9px] min-w-0 flex-1 bg-transparent text-[16px] leading-5 italic placeholder:text-[#6d6e70]"
        />
        <svg width="8" height="6" viewBox="0 0 8 6">
          <path d="M0 6h8L4 0z" fill="#444" />
        </svg>
      </div>
    </div>
  </div>
);

const Logo = () => (
  <svg width="150" height="110" viewBox="0 0 150 110" className="absolute right-[2px] bottom-[5px]" fill="#7f8490">
    <text x="15" y="58" fontSize="46" fontWeight="500">千</text>
    <text x="53" y="75" fontSize="44" fontWeight="500">秋</text>
    <text x="99" y="96" fontSize="46" fontWeight="500">雪</text>
    <path d="M115 41C97 56 78 86 101 104" fill="none" stroke="#7f8490" strokeWidth="1.500" />
    <g transform="translate(120 33)" fill="none" stroke="#7f8490" strokeWidth="1.800">
      {[0, 60, 120, 180, 240, 300].map((a) => (
        <path key={a} d="M0 0v-13M-4-10l4 4 4-4" transform={`rotate(${a + 15})`} />
      ))}
    </g>
  </svg>
);

const Canvas = () => (
  <div className="relative flex-1 overflow-hidden bg-[#212630]">
    <svg className="absolute inset-0 h-full w-full" fill="none" stroke="#eceef1">
      <path d="M0 56.500h1600M78.500 0v800" strokeWidth="1" />
      <path
        transform="translate(-39 -251)"
        d="M360 590C385 530 402 474.500 433 474.500C478 474.500 520 604.500 544 604.500C568 604.500 545 455 585 455C628 455 718 587.500 755 587.500C790 587.500 782 490 776 402"
        strokeWidth="1.200"
      />
      <g transform="translate(-39 -251)">
        <path d="M58.500 908v62.500H120M53.500 964.500h11v11h-11z" />
        <g stroke="none" fill="#eceef1" className="font-['Open_Sans']" fontWeight="300" fontSize="24">
          <text x="60" y="905">Y</text>
          <text x="125" y="970">X</text>
        </g>
      </g>
    </svg>
    <Logo />
    <CommandLine />
  </div>
);

const StatusGroup = ({ children, width }: { children: ReactNode; width: string }) => (
  <div className={`flex h-[30px] items-center justify-around bg-[#3b4453] ${width}`}>{children}</div>
);

const StatusIcon = ({ label, children }: { label: string; children: ReactNode }) => (
  <button aria-label={label}>
    <svg width="20" height="20" viewBox="0 0 20 20" fill="none" stroke={W}>
      {children}
    </svg>
  </button>
);

const StatusBar = () => (
  <footer className="flex h-[39px] border-t border-[#4a4f5c] bg-[#222933] pl-[17px] text-[15px] text-[#b4b8c1]">
    <button className="h-[21px] w-[60px] rounded-b-md bg-[#3b4453] font-bold leading-5 text-white">模型</button>
    <button className="ml-1 h-[21px] w-[60px] rounded-b-md bg-[#2c333f] leading-5">布局1</button>
    <button className="ml-[8px] h-[21px] w-[62px] rounded-b-md bg-[#2c333f] leading-5">布局2</button>
    <button aria-label="新布局" className="ml-[10px] flex h-[21px] w-6 items-center justify-center rounded-b-md bg-[#2c333f]">
      <svg width="10" height="10" viewBox="0 0 10 10" stroke="#b4b8c1" strokeWidth="2">
        <path d="M5 0v10M0 5h10" />
      </svg>
    </button>
    <div className="ml-auto flex gap-[2px] pt-px pr-[5px]">
      <div className="flex h-[30px] w-[262px] items-center justify-end bg-[#3a4552] pr-[6px] font-['Noto_Sans_CJK_SC',sans-serif] text-[14px] text-[#c4c8cf]">
        121615.8807, -10706.0804, 0.0000
      </div>
      <StatusGroup width="w-[81px]">
        <StatusIcon label="栅格">
          <path d="M5.500 1v18M10 1v18M14.500 1v18M1 5.500h18M1 10h18M1 14.500h18" strokeWidth="1.400" />
        </StatusIcon>
        <StatusIcon label="捕捉">
          <path d="M3 4h16M3 10h16M3 16h16" strokeWidth="2.500" strokeDasharray="2.500 3.500" />
        </StatusIcon>
        <Caret big />
      </StatusGroup>
      <StatusGroup width="w-[30px]">
        <StatusIcon label="动态输入">
          <path d="M5 1v10M0 6h10" />
          <path d="M8 12h12v6H8z" fill={W} />
        </StatusIcon>
      </StatusGroup>
      <StatusGroup width="w-[79px]">
        <StatusIcon label="正交">
          <path d="M1 0v19h19" />
          <path d="M1 13h6v6" />
        </StatusIcon>
        <StatusIcon label="极轴">
          <circle cx="9" cy="10" r="7.500" />
          <path d="m9 10 6-8M9 10h11M13 6v8" />
        </StatusIcon>
        <Caret big />
      </StatusGroup>
      <StatusGroup width="w-[79px]">
        <StatusIcon label="对象追踪">
          <path d="M18 2 1 18h19" />
          {dot(9, 10, "#fff", 1.5)}
        </StatusIcon>
        <StatusIcon label="对象捕捉">
          <path d="M3 4h16v15H3z" />
          <path d="M0 1h5v5H0z" fill="#3b4453" />
        </StatusIcon>
        <Caret big />
      </StatusGroup>
      <StatusGroup width="w-[31px]">
        <StatusIcon label="线宽">
          <path d="M0 3h10M0 13h10" strokeWidth="3" />
          <path d="M0 8h12" strokeWidth="2" />
          <path d="M0 18h10" strokeWidth="4" />
          <path d="M10 3h10M12 8h6M10 13h10M10 18h7" />
        </StatusIcon>
      </StatusGroup>
      <span className="w-1" />
      <StatusGroup width="w-[31px]">
        <StatusIcon label="自定义">
          <path d="M0 2h20M0 10h20M0 18h20" strokeWidth="2.500" />
        </StatusIcon>
      </StatusGroup>
    </div>
  </footer>
);

const CadWindow = () => (
  <section className="relative flex min-w-0 flex-1 flex-col border border-[#1f83a8] bg-[#222933]">
    <TitleBar />
    <MenuBar />
    <RibbonTabs />
    <Ribbon />
    <FileTabs />
    <div className="flex min-h-0 flex-1 pr-1">
      <ToolColumn />
      <Canvas />
    </div>
    <StatusBar />
    <DrawFlyout />
    <Tooltip />
    <Pointer />
  </section>
);

/* ---------- spreadsheet ---------- */

const rows: { no?: string; text: string }[] = [
  { no: "3", text: "快捷键" },
  { text: "SPL" },
  { no: "4", text: "命令" },
  { text: "SPLINE" },
  { no: "5", text: "类型" },
  { text: "拟合" },
  { text: "控制点" },
  { no: "6", text: "参数" },
  { text: "闭合与打开" },
  { text: "合并" },
  { text: "拟合数据" },
  { text: "编辑顶点" },
  { text: "转换为多段线" },
  { text: "反转" },
];

const Grid = () => (
  <div className="min-h-0 flex-1 overflow-hidden bg-white">
    <table className="-mt-[11px] w-full table-fixed border-separate border-spacing-0">
      <colgroup>
        <col className="w-[58px]" />
        <col />
      </colgroup>
      <tbody>
        {rows.map((r, i) => {
          const last = i === rows.length - 1;
          const dark = r.no || last || rows[i + 1].no;
          return (
            <tr key={r.text} className="h-[55px]">
              <td
                className={`border-b text-center text-[20px] text-white ${dark ? "border-b-black" : "border-b-[#d9d9d9]"} ${
                  r.no ? "bg-[#694279]" : ""
                }`}
              >
                {r.no}
              </td>
              <td
                className={`border-b border-l border-black pl-[2px] ${
                  r.no ? "bg-[#474a7f] text-[20px] text-white" : "text-[18px] text-black"
                }`}
              >
                {r.text}
              </td>
            </tr>
          );
        })}
        <tr className="h-[55px]">
          <td colSpan={2} className="bg-[#424658] pt-[2px] pl-[80px] text-[21px] whitespace-pre text-white">
            【 构造线 】
          </td>
        </tr>
      </tbody>
    </table>
  </div>
);

const SheetToolbar = () => (
  <div className="flex h-[42px] items-center overflow-hidden bg-[#f4f4f4] pb-[5px] text-[15px] whitespace-nowrap text-[#444]">
    <button className="w-[45px] shrink-0 border-r border-[#ddd] pl-[2px] text-left">文件</button>
    <svg width="182" height="20" viewBox="0 0 182 20" className="shrink-0" fill="none" stroke="#555" strokeWidth="1.500">
      <path d="M12 2h12l4 4v12H12zM15 18v-7h10v7M16 2v3h7" />
      <path d="M42 6h8M47 2l4 4-4 4M52 4c10-2 10 9 1 8h-6v6" />
      <path d="M73 7V2h12v5M71 13V7h16v8h-3M74 12h10v7H74z" />
      <path d="M108 18h-9V2h14v5M112 15l4 4" />
      <circle cx="110" cy="11" r="4.500" />
      <path d="M130 4v6h6M131 10c5-8 15-4 13 3-1 4-4 5-6 5" />
      <path d="m161 5 4 4.500-4 4.500M167 5l4 4.500-4 4.500" stroke="#999" strokeWidth="1.200" />
    </svg>
    <span className="h-7 w-px shrink-0 bg-[#ddd]" />
    <button className="ml-[7px] h-[26px] w-[34px] shrink-0 bg-[#4caf50] font-bold text-white">开始</button>
    <button className="w-[34px] shrink-0 border-r border-[#aaa]">插入</button>
    <button className="pl-[2px]">页面</button>
  </div>
);

const Spreadsheet = () => (
  <section className="flex w-[314px] shrink-0 flex-col overflow-hidden bg-[#eff1f6] font-['Noto_Sans_CJK_SC',sans-serif]">
    <div className="mt-[13px] flex h-10 whitespace-nowrap">
      <button className="h-[35px] w-[48px] overflow-hidden rounded-tr bg-[#5b8ff9] text-[15px] text-white">
        <span className="-ml-[28px]">首页</span>
      </button>
      <div className="ml-[3px] flex flex-1 items-center overflow-hidden border-t border-l border-[#d0d3da] bg-[#f4f4f6] pl-[11px] text-[15px] text-[#45a049]">
        <svg width="20" height="20" viewBox="0 0 20 20" className="shrink-0">
          <rect width="20" height="20" rx="1" fill="#1fb585" />
          <path d="M14.500 5.500H7.500a2.200 2.200 0 0 0 0 4.400h5a2.200 2.200 0 0 1 0 4.400H5.500" fill="none" stroke="#fff" strokeWidth="1.600" />
        </svg>
        <span className="pl-[5px]">【千秋雪老师CAD教程】.xlsx</span>
        <svg width="16" height="14" viewBox="0 0 16 14" className="ml-6 shrink-0" fill="none" stroke="#aaa">
          <rect x="1" y="1" width="14" height="9" />
        </svg>
      </div>
    </div>
    <SheetToolbar />
    <div className="flex h-[55px] items-center border-t border-[#dadada] bg-[#e9e9e9] pt-[3px] font-['Liberation_Serif','Noto_Sans_CJK_SC',serif] text-[#555]">
      <label className="flex h-7 w-[153px] items-center rounded-r border border-l-0 border-[#d0d0d0] bg-white pr-1">
        <input aria-label="名称框" defaultValue="B235" className="min-w-0 flex-1 pl-[35px] text-[17px]" />
        <svg width="6" height="4" viewBox="0 0 6 4">
          <path d="M0 0h6L3 4z" fill="#888" />
        </svg>
      </label>
      <svg width="22" height="22" viewBox="0 0 22 22" className="ml-[53px]" fill="none" stroke="#555" strokeWidth="1.500">
        <circle cx="9" cy="9" r="7.500" />
        <path d="M5.500 7.500h7M5.500 10.500h7M15 15l6 6" />
      </svg>
      <button className="w-[38px] text-[24px] leading-6 italic">fx</button>
      <input aria-label="编辑栏" defaultValue="对象" className="h-7 min-w-0 flex-1 rounded-l border border-[#d0d0d0] bg-white pl-[14px] text-[17px] text-[#333]" />
    </div>
    <div className="flex h-[26px] text-[17px] leading-[26px] text-[#666]">
      <div className="w-[58px] bg-[#e9e9e9] text-center">A</div>
      <div className="flex-1 border-b-2 border-[#4d9a5b] bg-[#d4d4d4]" />
    </div>
    <Grid />
    <div className="h-[61px] bg-[#f3f3f3]">
      <div className="flex h-[26px] items-center overflow-hidden bg-[#e4e4e4] text-[15px] whitespace-nowrap text-[#555]">
        <svg width="106" height="16" viewBox="0 0 106 16" fill="none" stroke="#555" strokeWidth="1.500" className="shrink-0">
          <path d="m18 1-7 7 7 7M43 1l7 7-7 7M73 1l7 7-7 7M84 1v14" />
        </svg>
        <button className="h-full w-[112px] shrink-0 bg-[#cfcfcf]">1 基本设置</button>
        <button className="h-full w-[80px] shrink-0 bg-white font-bold text-[#3fa047]">2 绘图</button>
        <button className="h-full flex-1 bg-[#cfcfcf] pl-[2px] text-left">3 修改</button>
      </div>
    </div>
  </section>
);

/* ---------- taskbar ---------- */

const CamIcon = ({ color }: { color: string }) => (
  <svg width="30" height="30" viewBox="0 0 30 30">
    <rect width="30" height="30" rx="3" fill={color} />
    <path d="M24 4H12q-6 0-6 6v10q0 6 6 6h12l-2-4h-8q-3 0-3-3v-8q0-3 3-3h8z" fill="#fff" />
  </svg>
);

const TaskButton = ({ label, active, children }: { label: string; active?: boolean; children: ReactNode }) => (
  <button
    aria-label={label}
    className={`flex h-[50px] items-center justify-center border-b-[3px] border-[#7ab3e8] ${active ? "mx-[6px] w-[61px] bg-[#50616b]" : "w-[51px]"}`}
  >
    {children}
  </button>
);

const Taskbar = () => (
  <div className="relative flex h-[50px] shrink-0 items-center bg-linear-to-r from-[#243640] via-[#213340] to-[#1a2944]">
    <button aria-label="开始" className="flex w-[69px] pl-5">
      <svg width="20" height="20" viewBox="0 0 20 20" fill="#fff">
        <path d="M0 3l9-1.300V9.500H0zM10 1.500 20 0v9.500H10zM0 10.500h9v7.800L0 17zM10 10.500h10V20l-10-1.500z" />
      </svg>
    </button>
    <TaskButton label="Camtasia"><CamIcon color="#4fa116" /></TaskButton>
    <span className="w-[10px]" />
    <TaskButton label="WPS">
      <svg width="26" height="26" viewBox="0 0 26 26">
        <rect width="26" height="26" rx="3" fill="#2e7ce8" />
        <path d="M4 8h5l3 9 4-9M9 8h6l3 9 4-9" fill="none" stroke="#fff" strokeWidth="1.800" />
      </svg>
    </TaskButton>
    <TaskButton label="AutoCAD" active>
      <span className="flex h-[30px] w-[30px] items-center justify-center bg-[#f8f1f0]">
        <LetterA className="text-[30px] leading-[30px] font-bold text-[#c01f2c]" />
      </span>
    </TaskButton>
    <TaskButton label="Recorder"><CamIcon color="#f2553f" /></TaskButton>

    <div className="pointer-events-none absolute top-0 left-[11px] flex items-center gap-[8px] text-white/35">
      <span className="flex h-[38px] w-[39px] items-center justify-center rounded-md bg-white/25">
        <svg width="30" height="26" viewBox="0 0 30 26" fill="#22313b">
          <path d="M2 8C10-2 16 3 20 6q10 4 10 7-6 8-15 2Q8 10 2 14z" fillOpacity=".7" />
        </svg>
      </span>
      <span className="font-['Open_Sans'] text-[37px] leading-[38px] font-bold">tafe.cc</span>
    </div>

    <div className="ml-auto flex items-center text-white">
      <svg width="150" height="24" viewBox="0 0 150 24" fill="none" stroke="#eceef1" strokeWidth="1.500">
        <path d="m2 16 8-8 8 8" />
        <rect x="34" y="2" width="9" height="13" rx="1" fill="#fff" stroke="none" />
        <path d="M32.500 10v7h12v-7M38.500 17v4M34 21.500h9" />
        <path d="M61 4q5 0 9-2 4 2 9 2c0 10-3 14-9 18-6-4-9-8-9-18z" fill="#3b82f6" stroke="#cfe3ff" />
        <path d="m65 9 5 4 5-4" strokeWidth="2.500" />
        <path d="M94 4h16v12H92v-6M101 16v4M96 20h10" />
        <path d="M90 3h5v5h-5z" />
        <path d="M121 9h3l5-5v15l-5-5h-3z" />
        <path d="M132 8q2 3.500 0 7M135.500 6q3.500 5.500 0 11" stroke="#a7b0bf" />
      </svg>
      <span className="w-[53px] text-[15px]">ENG</span>
      <button aria-label="通知" className="relative w-[47px]">
        <svg width="20" height="19" viewBox="0 0 20 19">
          <path d="M0 0h20v15H10l-4 4v-4H0z" fill="#fff" />
          <path d="M4 4h12M4 7.500h12M4 11h8" stroke="#1a2944" strokeWidth="1.200" />
        </svg>
        <span className="absolute top-[9px] left-[10px] flex h-5 w-5 items-center justify-center rounded-full border border-[#9aa1ad] bg-[#3a4048] text-[15px] leading-none font-bold">
          2
        </span>
      </button>
      <span className="mr-1 h-[50px] w-px bg-[#6b768a]" />
    </div>
  </div>
);

const App = () => (
  <div className="flex h-screen flex-col overflow-hidden bg-[#222933] font-['Open_Sans','Noto_Sans_CJK_SC',sans-serif]">
    <div className="flex min-h-0 flex-1">
      <CadWindow />
      <Spreadsheet />
    </div>
    <Taskbar />
  </div>
);

export default App;
